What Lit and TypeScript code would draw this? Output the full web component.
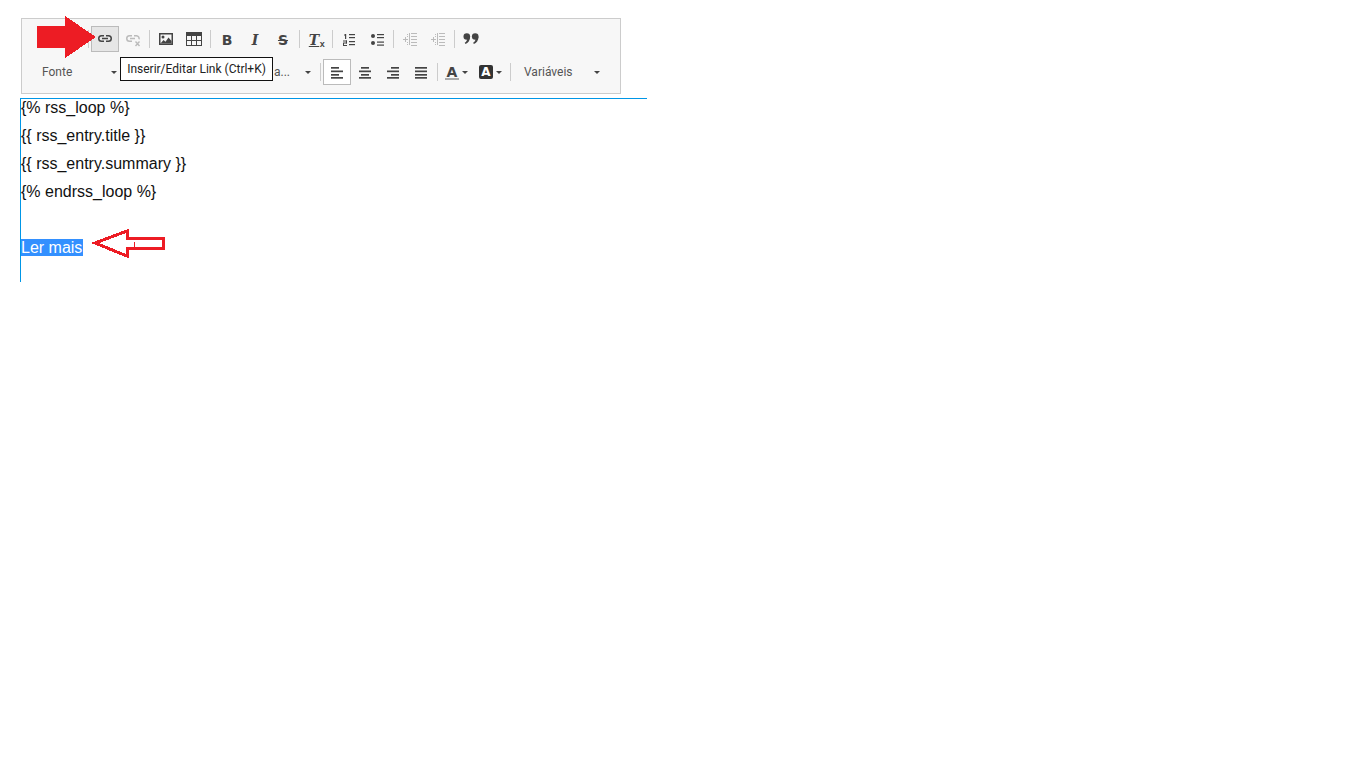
import { LitElement, css, html, svg } from "lit";
import { customElement } from "lit/decorators.js";

const bars = (rows: number[][]) =>
  rows.map(([x, y, w, h]) => svg`<rect x=${x} y=${y} width=${w} height=${h}></rect>`);

const icons = {
  link: svg`<path fill="none" stroke="currentColor" stroke-width="1.500" d="M7 4.750H4.500a2.750 2.750 0 0 0 0 5.500H7M9 4.750h2.500a2.750 2.750 0 0 1 0 5.500H9M5 7.500h6"></path>`,
  unlink: svg`<path fill="none" stroke="currentColor" stroke-width="1.500" d="M7 4.750H4.500a2.750 2.750 0 0 0 0 5.500H7M9 4.750h2.500a2.750 2.750 0 0 1 2.500 3.500M5 7.500h5"></path><path fill="none" stroke="currentColor" stroke-width="1.400" d="M10.500 10.500l4 4.500M14.500 10.500l-4 4.500"></path>`,
  image: svg`<path fill-rule="evenodd" d="M1 2h14v12H1zM2.500 3.500v9h11v-9z"></path><circle cx="5" cy="6" r="1.500"></circle><path d="M2.500 12.500l3-3.500 2 1.800 3-4.300 3 3.500v2.500z"></path>`,
  table: svg`<path fill-rule="evenodd" d="M0 1h16v14H0zM1 5v4h4V5zm5 0v4h4V5zm5 0v4h4V5zM1 10v4h4v-4zm5 0v4h4v-4zm5 0v4h4v-4z"></path>`,
  ol: svg`${bars([[8, 3, 6, 1.200], [8, 6, 6, 1.200], [8, 10, 6, 1.200], [8, 13, 6, 1.200], [4, 3, 1.200, 5], [3, 3.500, 1.200, 1], [2, 9.500, 4, 1], [5, 9.500, 1, 3], [2, 11.500, 4, 1], [2, 12, 1, 2.500], [2, 14, 4, 1]])}`,
  ul: svg`<circle cx="4" cy="5" r="2"></circle><circle cx="4" cy="12" r="2"></circle>${bars([[8, 3, 7, 1.200], [8, 6, 7, 1.200], [8, 10.500, 7, 1.200], [8, 13.500, 7, 1.200]])}`,
  outdent: svg`${bars([[7, 2, 1, 12], [9, 2, 6, 1], [9, 5, 6, 1], [9, 8, 6, 1], [9, 11, 6, 1], [9, 14, 6, 1], [1, 8, 5, 1], [3, 6, 1, 5], [5, 3, 1, 1], [5, 5, 1, 1], [5, 11, 1, 1], [5, 13, 1, 1]])}`,
  indent: svg`${bars([[7, 2, 1, 12], [9, 2, 6, 1], [9, 5, 6, 1], [9, 8, 6, 1], [9, 11, 6, 1], [9, 14, 6, 1], [1, 8, 5, 1], [3, 6, 1, 5], [5, 3, 1, 1], [5, 5, 1, 1], [5, 11, 1, 1], [5, 13, 1, 1]])}`,
  quote: svg`<circle cx="3.800" cy="5.500" r="3.300"></circle><path d="M7.100 5.500c0 4-2 6.500-4.600 7.500l-.8-1.200c1.800-1 2.500-2.800 2.500-4.300z"></path><circle cx="12.200" cy="5.500" r="3.300"></circle><path d="M15.500 5.500c0 4-2 6.500-4.600 7.500l-.8-1.200c1.800-1 2.500-2.800 2.500-4.300z"></path>`,
  left: svg`${bars([[2, 3, 8, 1.700], [2, 6.500, 12, 1.700], [2, 10, 8, 1.700], [2, 13, 12, 1.700]])}`,
  center: svg`${bars([[4, 3, 8, 1.700], [2, 6.500, 12, 1.700], [4, 10, 8, 1.700], [2, 13, 12, 1.700]])}`,
  right: svg`${bars([[6, 3, 8, 1.700], [2, 6.500, 12, 1.700], [6, 10, 8, 1.700], [2, 13, 12, 1.700]])}`,
  justify: svg`${bars([[2, 3, 12, 1.700], [2, 6.500, 12, 1.700], [2, 10, 12, 1.700], [2, 13, 12, 1.700]])}`,
};

type IconName = keyof typeof icons;

@customElement("app-root")
export class AppRoot extends LitElement {
  static styles = css`
    :host {
      display: block;
      position: relative;
      height: 768px;
      padding: 18px 0 0 20px;
      box-sizing: border-box;
      background: #fff;
      font-family: Roboto, "Liberation Sans", sans-serif;
    }
    * { box-sizing: border-box; }

    .toolbar {
      width: 600px;
      height: 76px;
      margin-left: 1px;
      padding: 6px 0 0;
      border: 1px solid #ccc;
      background: #f7f7f7;
      color: #444;
      display: flex;
      flex-direction: column;
      gap: 5px;
    }
    .row {
      display: flex;
      align-items: center;
      height: 28px;
    }
    .row.first { padding-left: 64px; }
    .row.second { padding-left: 6px; }

    .btn {
      width: 28px;
      height: 26px;
      display: flex;
      align-items: center;
      justify-content: center;
      border: 1px solid transparent;
    }
    .btn svg { width: 16px; height: 16px; fill: currentColor; display: block; }
    .btn.hover { background: #e6e6e6; border-color: #bbb; }
    .btn.active { background: #fff; border-color: #bbb; }
    .btn.off { color: #bbb; }

    .sep {
      width: 1px;
      height: 18px;
      margin: 0 2px;
      background: #ccc;
    }

    .glyph { font-size: 14px; line-height: 16px; margin-top: 1px; }
    .bold { font-family: "DejaVu Sans", sans-serif; font-weight: 700; }
    .ital { font-family: "DejaVu Serif", serif; font-weight: 700; font-style: italic; }
    .strike { text-decoration: line-through; }
    .clear {
      position: relative;
      font-family: "DejaVu Serif", serif;
      font-weight: 700;
      font-style: italic;
      text-decoration: underline;
      margin-left: -4px;
    }
    .clear small {
      position: absolute;
      left: 11px;
      top: 7px;
      font: 700 9px/10px "Liberation Sans", sans-serif;
    }

    .combo {
      height: 28px;
      display: flex;
      align-items: center;
      justify-content: space-between;
      font-size: 12px;
      color: #555;
    }
    .combo.font { width: 92px; padding: 0 3px 0 14px; }
    .combo.size { width: 85px; margin-left: 113px; padding: 0 7px 0 41px; }
    .combo.vars { width: 90px; padding: 0 3px 0 11px; }

    .caret {
      display: block;
      border-style: solid;
      border-width: 3px 3.500px 0;
      border-color: #444 transparent transparent;
    }

    .color {
      width: 34px;
      height: 28px;
      padding-left: 5px;
      display: flex;
      align-items: center;
      gap: 3px;
    }
    .color .letter {
      width: 14px;
      height: 14px;
      display: flex;
      align-items: center;
      justify-content: center;
      font: 700 14px/14px "DejaVu Sans", sans-serif;
    }
    .color .fore { height: 15px; margin-top: 1px; border-bottom: 2px solid #aaa; }
    .color .back { background: #333; color: #fff; border-radius: 2px; font-size: 12px; }

    .editor {
      width: 627px;
      height: 184px;
      margin-top: 4px;
      border-top: 1px solid #0096e6;
      border-left: 1px solid #0096e6;
      font: 16px/18px "Liberation Sans", Arial, sans-serif;
      color: #111;
    }
    .editor p { margin: 0 0 10px; height: 18px; }
    .selected { background: #3390ff; color: #fff; padding-right: 1px; }

    .tooltip {
      position: absolute;
      left: 120px;
      top: 57px;
      width: 153px;
      height: 24px;
      border: 1px solid #111;
      background: #fff;
      color: #222;
      font-size: 12px;
      line-height: 23px;
      text-align: center;
      white-space: nowrap;
    }

    .marks {
      position: absolute;
      left: 0;
      top: 0;
      pointer-events: none;
    }
  `;

  private btn(name: IconName, cls = "") {
    return html`<div class="btn ${cls}"><svg viewBox="0 0 16 16">${icons[name]}</svg></div>`;
  }

  private glyph(text: string, cls: string) {
    return html`<div class="btn"><span class="glyph ${cls}">${text}</span></div>`;
  }

  render() {
    const sep = html`<div class="sep"></div>`;
    const caret = html`<span class="caret"></span>`;
    return html`
      <div class="toolbar">
        <div class="row first">
          ${sep}
          ${this.btn("link", "hover")}
          ${this.btn("unlink", "off")}
          ${sep}
          ${this.btn("image")}
          ${this.btn("table")}
          ${sep}
          ${this.glyph("B", "bold")}
          ${this.glyph("I", "ital")}
          ${this.glyph("S", "bold strike")}
          ${sep}
          <div class="btn"><span class="glyph clear">T<small>x</small></span></div>
          ${sep}
          ${this.btn("ol")}
          ${this.btn("ul")}
          ${sep}
          ${this.btn("outdent", "off")}
          ${this.btn("indent", "off")}
          ${sep}
          ${this.btn("quote")}
        </div>
        <div class="row second">
          <div class="combo font"><span>Fonte</span>${caret}</div>
          <div class="combo size"><span>a...</span>${caret}</div>
          ${sep}
          ${this.btn("left", "active")}
          ${this.btn("center")}
          ${this.btn("right")}
          ${this.btn("justify")}
          ${sep}
          <div class="color"><span class="letter fore">A</span>${caret}</div>
          <div class="color"><span class="letter back">A</span>${caret}</div>
          ${sep}
          <div class="combo vars"><span>Variáveis</span>${caret}</div>
        </div>
      </div>

      <div class="editor">
        <p>{% rss_loop %}</p>
        <p>{{ rss_entry.title }}</p>
        <p>{{ rss_entry.summary }}</p>
        <p>{% endrss_loop %}</p>
        <p></p>
        <p><span class="selected">Ler mais</span></p>
      </div>

      <div class="tooltip">Inserir/Editar Link (Ctrl+K)</div>

      <svg class="marks" width="200" height="270" shape-rendering="crispEdges">
        <polygon fill="#ed1c24" points="37,26 65,26 65,16 96,37 65,58 65,48 37,48"></polygon>
        <polygon fill="none" stroke="#ed1c24" stroke-width="3" points="95,243 127,231 127,238 163,238 163,248 127,248 127,256"></polygon>
        <rect x="134" y="242" width="1" height="7" fill="#ed1c24"></rect>
      </svg>
    `;
  }
}
